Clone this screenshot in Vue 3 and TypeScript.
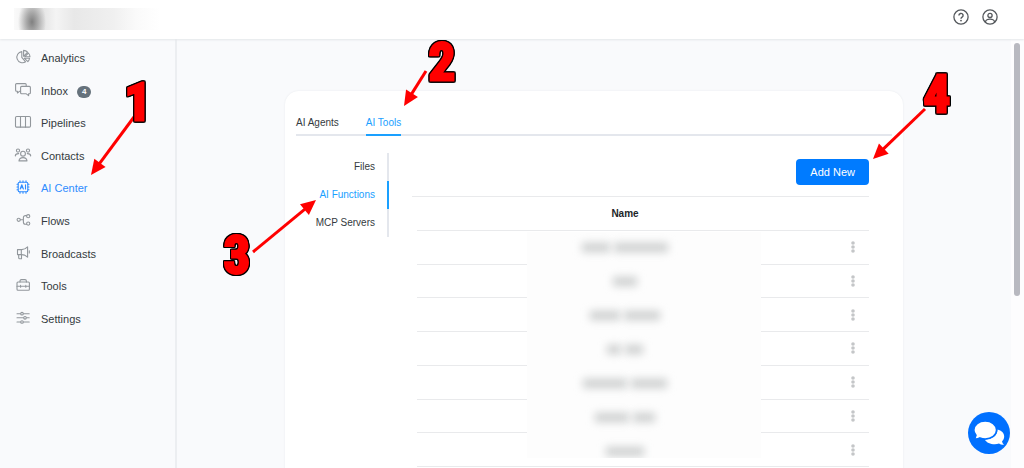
<script setup lang="ts">
import { ref } from 'vue'

interface NavItem {
  label: string
  icon: string
  badge?: number
}

interface Arrow {
  from: [number, number]
  to: [number, number]
}

interface Step {
  text: string
  x: number
  y: number
}

const nav: NavItem[] = [
  { label: 'Analytics', icon: 'analytics' },
  { label: 'Inbox', icon: 'inbox', badge: 4 },
  { label: 'Pipelines', icon: 'pipelines' },
  { label: 'Contacts', icon: 'contacts' },
  { label: 'AI Center', icon: 'ai' },
  { label: 'Flows', icon: 'flows' },
  { label: 'Broadcasts', icon: 'broadcasts' },
  { label: 'Tools', icon: 'tools' },
  { label: 'Settings', icon: 'settings' },
]
const activeNav = ref('AI Center')

const tabs = ['AI Agents', 'AI Tools']
const activeTab = ref('AI Tools')

const sections = ['Files', 'AI Functions', 'MCP Servers']
const activeSection = ref('AI Functions')

// Word widths of each hidden name
const hiddenNames: number[][] = [[28, 54], [24], [30, 36], [14, 18], [44, 36], [34, 22], [38]]

const arrows: Arrow[] = [
  { from: [134, 117], to: [91, 175] },
  { from: [426, 71], to: [404, 106] },
  { from: [253, 252], to: [316, 200] },
  { from: [925, 109], to: [873, 159] },
]

const steps: Step[] = [
  { text: '1', x: 138, y: 120 },
  { text: '2', x: 442, y: 80 },
  { text: '3', x: 237, y: 273 },
  { text: '4', x: 937, y: 112 },
]

function headPoints({ from, to }: Arrow): string {
  const dx = to[0] - from[0]
  const dy = to[1] - from[1]
  const len = Math.hypot(dx, dy)
  const ux = dx / len
  const uy = dy / len
  const bx = to[0] - ux * 15
  const by = to[1] - uy * 15
  return `${to[0]},${to[1]} ${bx - uy * 7},${by + ux * 7} ${bx + uy * 7},${by - ux * 7}`
}

function shaftEnd({ from, to }: Arrow): [number, number] {
  const dx = to[0] - from[0]
  const dy = to[1] - from[1]
  const len = Math.hypot(dx, dy)
  return [to[0] - (dx / len) * 12, to[1] - (dy / len) * 12]
}
</script>

<template>
  <div class="app">
    <header class="topbar">
      <div class="brand" aria-hidden="true"></div>
      <div class="top-actions">
        <button type="button" class="icon-button" aria-label="Help">
          <svg viewBox="0 0 16 16" fill="none" stroke="currentColor">
            <circle cx="8" cy="8" r="7.1" stroke-width="1.3" />
            <path d="M5.9 6.5a2.1 2 0 1 1 3.2 1.6C8.3 8.6 8 8.9 8 9.8" stroke-width="1.4" />
            <circle cx="8" cy="11.6" r=".9" fill="currentColor" stroke="none" />
          </svg>
        </button>
        <button type="button" class="icon-button" aria-label="Account">
          <svg viewBox="0 0 16 16" fill="none" stroke="currentColor" stroke-width="1.3">
            <circle cx="8" cy="8" r="7.1" />
            <circle cx="8" cy="6.4" r="2.1" />
            <path d="M3.4 13.2c.3-2.3 1.8-3 4.6-3s4.3.7 4.6 3" />
          </svg>
        </button>
      </div>
    </header>

    <div class="body">
      <nav class="sidebar">
        <a
          v-for="item in nav"
          :key="item.label"
          href="#"
          class="nav-link"
          :class="{ active: item.label === activeNav }"
          @click.prevent="activeNav = item.label"
        >
          <svg class="nav-icon" viewBox="0 0 18 18" fill="none" stroke="currentColor" stroke-width="1.1" stroke-linejoin="round" stroke-linecap="round" aria-hidden="true">
            <g v-if="item.icon === 'analytics'">
              <path d="M7.8 3.6A5.6 5.6 0 1 0 11.6 13.8L7.8 9.4Z" />
              <path d="M9.6 2.4V8.3L13.6 4.2A6 6 0 0 0 9.6 2.4Z" />
              <path d="M14.4 5 10.6 8.8H16A6 6 0 0 0 14.4 5Z" />
              <path d="M10.4 10.3h5.2a5.4 5.4 0 0 1-1.7 3.3Z" />
            </g>
            <g v-else-if="item.icon === 'inbox'">
              <path d="M6.600 10.300H5.400L3.400 12v-1.700H2.600a1 1 0 0 1-1-1V3.600a1 1 0 0 1 1-1h8.600a1 1 0 0 1 1 1v1.600" />
              <path d="M7.600 5.400h7.800a1 1 0 0 1 1 1v5.400a1 1 0 0 1-1 1h-.8v1.900l-2.300-1.900H7.600a1 1 0 0 1-1-1V6.400a1 1 0 0 1 1-1Z" />
            </g>
            <g v-else-if="item.icon === 'pipelines'">
              <rect x="1.5" y="3.5" width="15" height="10.6" rx="1.2" />
              <path d="M6.5 3.5v10.6M11.5 3.5v10.6" />
            </g>
            <g v-else-if="item.icon === 'contacts'">
              <circle cx="9" cy="7.700" r="2.400" />
              <path d="M5 14.900c.2-2.300 1.600-3.300 4-3.300s3.800 1 4 3.300Z" />
              <circle cx="4" cy="4.600" r="1.600" />
              <circle cx="14" cy="4.600" r="1.600" />
              <path d="M1.300 9.900c.1-1.800 1-2.400 3.400-2.300M16.700 9.900c-.1-1.800-1-2.400-3.400-2.300" />
            </g>
            <g v-else-if="item.icon === 'ai'">
              <rect x="4.200" y="4.200" width="9.600" height="9.600" rx="1.300" />
              <path d="M6 4V2.800M9 4V2.800M12 4V2.800M6 15.200V14M9 15.200V14M12 15.200V14M4 6.200H3M4 9H3M4 11.800H3M15 6.200h-1M15 9h-1M15 11.800h-1" />
              <path d="m6.200 11 1.600-4.200L9.400 11M6.800 9.800h2M11.500 6.800V11" />
            </g>
            <g v-else-if="item.icon === 'flows'">
              <circle cx="4.700" cy="8.800" r="1.600" />
              <circle cx="14.200" cy="5.200" r="1.600" />
              <circle cx="14.200" cy="12.600" r="1.600" />
              <path d="M6.300 8.800h3M12.600 4.600h-1.200a2 2 0 0 0-2 2v4.600a2 2 0 0 0 2 2h1.200" />
            </g>
            <g v-else-if="item.icon === 'broadcasts'">
              <path d="M3.500 5.600h4.200c2 0 4-.9 5.900-2.800v10.400c-1.900-1.900-3.900-2.600-5.900-2.600H3.500Z" />
              <path d="M7.300 5.600v5M4.700 10.600v3.200a1 1 0 0 0 1 1h1.800v-4M15.300 6.800v2.200" />
            </g>
            <g v-else-if="item.icon === 'tools'">
              <rect x="3" y="6" width="12.400" height="8.200" rx="1" />
              <path d="M6 6V5a1.400 1.400 0 0 1 1.400-1.400h3.600A1.400 1.400 0 0 1 12.400 5v1M3 10.300h2.600M7.600 10.300h3.200M12.800 10.300h2.600M6.600 9.300v2M11.800 9.300v2" />
            </g>
            <g v-else>
              <path d="M3 4.700h3.400M9.600 4.700h5.600M3 8.800h6.400M12.600 8.800h2.600M3 13h3.400M9.600 13h5.600" />
              <circle cx="8" cy="4.700" r="1.300" />
              <circle cx="11" cy="8.800" r="1.300" />
              <circle cx="8" cy="13" r="1.300" />
            </g>
          </svg>
          <span>{{ item.label }}</span>
          <span v-if="item.badge" class="badge">{{ item.badge }}</span>
        </a>
      </nav>

      <main class="main">
        <section class="card">
          <div class="tabs" role="tablist">
            <button
              v-for="tab in tabs"
              :key="tab"
              type="button"
              role="tab"
              class="tab"
              :class="{ active: tab === activeTab }"
              :aria-selected="tab === activeTab"
              @click="activeTab = tab"
            >
              {{ tab }}
            </button>
          </div>

          <div class="panel">
            <div class="side-tabs" role="tablist" aria-orientation="vertical">
              <button
                v-for="section in sections"
                :key="section"
                type="button"
                role="tab"
                class="side-tab"
                :class="{ active: section === activeSection }"
                :aria-selected="section === activeSection"
                @click="activeSection = section"
              >
                {{ section }}
              </button>
            </div>

            <div class="content">
              <div class="toolbar">
                <button type="button" class="add-button">Add New</button>
              </div>
              <div class="table-wrap">
                <table class="table">
                  <thead>
                    <tr>
                      <th scope="col">Name</th>
                      <td class="menu-cell"></td>
                    </tr>
                  </thead>
                  <tbody>
                    <tr v-for="(_, i) in hiddenNames" :key="i">
                      <td></td>
                      <td class="menu-cell">
                        <button type="button" class="menu-button" aria-label="Row actions">
                          <svg viewBox="0 0 4 12" fill="currentColor">
                            <circle cx="2" cy="2" r="1.800" />
                            <circle cx="2" cy="6" r="1.800" />
                            <circle cx="2" cy="10" r="1.800" />
                          </svg>
                        </button>
                      </td>
                    </tr>
                  </tbody>
                </table>
                <div class="veil" aria-hidden="true">
                  <div v-for="(words, i) in hiddenNames" :key="i" class="veil-row">
                    <span v-for="(w, j) in words" :key="j" class="smudge" :style="{ width: w + 'px' }"></span>
                  </div>
                </div>
              </div>
            </div>
          </div>
        </section>
      </main>

      <div class="scroll-track" aria-hidden="true"><div class="scroll-thumb"></div></div>
    </div>

    <button type="button" class="chat-button" aria-label="Open chat">
      <svg viewBox="0 0 42 42">
        <path fill="#fff" d="M29.500 17.600c3.900 1 6.700 3.600 6.700 7 0 1.900-.8 3.500-2.200 4.800.2 1.200.9 2.300 2 3.300-1.800.3-3.500-.1-5-1.100-1.300.4-2.700.7-4.200.7-4.500 0-8.300-1.900-9.900-4.600 7.200-.2 12.600-4.300 12.600-10.100Z" />
        <path fill="#fff" stroke="#0070ff" stroke-width="1.600" d="M17.200 9c6.300 0 11.400 4 11.400 9s-5.100 9-11.400 9c-1.900 0-3.700-.4-5.300-1-1.700 1-3.900 1.400-6.100 1 1.300-1 2-2.300 2.200-3.800C6.600 21.700 5.800 19.900 5.800 18c0-5 5.100-9 11.400-9Z" />
      </svg>
    </button>

    <svg class="annotations">
      <g v-for="(a, i) in arrows" :key="i">
        <line :x1="a.from[0]" :y1="a.from[1]" :x2="shaftEnd(a)[0]" :y2="shaftEnd(a)[1]" stroke="#f00" stroke-width="3" />
        <polygon :points="headPoints(a)" fill="#f00" />
      </g>
      <text v-for="s in steps" :key="s.text" class="step" :x="s.x" :y="s.y">{{ s.text }}</text>
    </svg>
  </div>
</template>

<style>
body {
  margin: 0;
  overflow: hidden;
}
</style>

<style scoped>
.app {
  position: relative;
  display: flex;
  flex-direction: column;
  height: 100vh;
  overflow: hidden;
  background: #f9fafc;
  color: #343a40;
  font-family: "Liberation Sans", Arial, sans-serif;
  font-size: 11px;
}

button {
  margin: 0;
  padding: 0;
  border: 0;
  background: none;
  color: inherit;
  font: inherit;
  cursor: pointer;
}

svg {
  display: block;
}

.topbar {
  position: relative;
  z-index: 1;
  display: flex;
  flex: none;
  align-items: flex-start;
  justify-content: space-between;
  height: 39px;
  padding: 8px 26px 0 14px;
  box-sizing: border-box;
  background: #fff;
  box-shadow: 0 1px 2px #e4e6e9;
}

.brand {
  width: 146px;
  height: 22px;
  background:
    radial-gradient(ellipse 14px 24px at 18px 14px, #808080 0, #808080a0 40%, #80808000 100%),
    linear-gradient(90deg, #fafafa 0, #e6e6e6 30px, #f4f4f4 42px, #e8e8e8 60px, #ebebeb 76px, #f0f0f0 100px, #fafafa 122px, #fff 100%);
}

.top-actions {
  display: flex;
  gap: 13px;
  padding-top: 1px;
}

.icon-button {
  width: 16px;
  height: 16px;
  color: #54585c;
}

.body {
  display: flex;
  flex: 1;
  min-height: 0;
}

.sidebar {
  display: grid;
  grid-auto-rows: 1fr;
  flex: none;
  width: 161px;
  height: 293px;
  padding: 3px 0 133px 14px;
  border-right: 2px solid #eceef1;
}

.nav-link {
  display: flex;
  align-items: center;
  gap: 9px;
  color: inherit;
  text-decoration: none;
}

.nav-icon {
  width: 18px;
  height: 18px;
  margin-bottom: 2px;
  color: #92979c;
}

.nav-link.active,
.nav-link.active .nav-icon {
  color: #2f8cff;
}

.badge {
  margin-top: 2px;
  padding: 0 5px;
  border-radius: 6px;
  background: #66727c;
  color: #fff;
  font-size: 8px;
  font-weight: 700;
  line-height: 12px;
}

.main {
  display: flex;
  flex: 1;
  justify-content: center;
  min-width: 0;
  padding-top: 52px;
  overflow: hidden;
}

.card {
  flex: 0 1 596px;
  align-self: flex-start;
  padding: 16px 11px 40px;
  border-radius: 14px;
  background: #fff;
  box-shadow: 0 0 2px #e6e8ec;
}

.tabs {
  display: flex;
  gap: 27px;
  box-shadow: inset 0 -2px #e4e7ed;
  font-size: 10px;
}

.tab {
  height: 29px;
  padding-top: 3px;
  border-bottom: 2px solid transparent;
}

.tab.active {
  border-color: #1aa0ff;
  color: #1aa0ff;
}

.panel {
  display: flex;
  gap: 23px;
  padding: 17px 23px 0 0;
}

.side-tabs {
  display: flex;
  flex: none;
  flex-direction: column;
  align-self: flex-start;
  width: 93px;
  font-size: 10px;
}

.side-tab {
  height: 28px;
  padding: 0 12px 2px 0;
  border-right: 2px solid #e4e7ed;
  text-align: right;
}

.side-tab.active {
  border-color: #1aa0ff;
  color: #1aa0ff;
}

.content {
  flex: 1;
  min-width: 0;
}

.toolbar {
  display: flex;
  justify-content: flex-end;
  padding: 6px 0 11px;
  border-bottom: 1px solid #e9eaec;
}

.add-button {
  padding: 0 14px;
  border-radius: 4px;
  background: #007bff;
  color: #fff;
  line-height: 26px;
}

.table-wrap {
  position: relative;
  margin-left: 5px;
}

.table {
  width: 100%;
  height: 270px;
  border-collapse: collapse;
}

.table th,
.table td {
  padding: 0;
  border-bottom: 1px solid #e9eaec;
}

.table th {
  height: 33px;
  color: #212529;
  font-size: 10px;
  text-align: center;
}

.table .menu-cell {
  width: 32px;
  padding-left: 4px;
}

.menu-button {
  display: grid;
  place-items: center;
  width: 32px;
  height: 20px;
  color: #c4c6c8;
}

.menu-button svg {
  width: 4px;
  height: 12px;
}

.veil {
  position: absolute;
  top: 35px;
  left: calc(50% - 116px);
  display: grid;
  grid-auto-rows: 34px;
  width: 234px;
  height: 226px;
  overflow: hidden;
  background: #fdfdfd;
}

.veil-row {
  display: flex;
  align-items: center;
  justify-content: center;
  gap: 4px;
  padding: 0 38px 4px 0;
}

.smudge {
  height: 9px;
  background: #cccece;
  filter: blur(4px);
}

.scroll-track {
  flex: none;
  width: 13px;
  padding-top: 4px;
  box-sizing: border-box;
  background: #fdfdfe;
}

.scroll-thumb {
  width: 6px;
  height: 253px;
  margin-left: 3px;
  border-radius: 3px;
  background: #b8b9c0;
}

.chat-button {
  position: absolute;
  right: 14px;
  bottom: 14px;
  width: 42px;
  height: 42px;
  border-radius: 50%;
  background: #0070ff;
}

.annotations {
  position: absolute;
  inset: 0;
  z-index: 2;
  width: 100%;
  height: 100%;
  pointer-events: none;
}

.step {
  fill: #f00;
  stroke: #f00;
  stroke-width: 3px;
  stroke-linejoin: miter;
  font-family: "Liberation Sans Narrow", "Arial Narrow", "Roboto Condensed", "Open Sans Condensed", "Liberation Sans", sans-serif;
  font-size: 52px;
  font-weight: 700;
  text-anchor: middle;
  filter: drop-shadow(1px 0 #000) drop-shadow(-1px 0 #000) drop-shadow(0 1px #000) drop-shadow(0 -1px #000);
}
</style>
